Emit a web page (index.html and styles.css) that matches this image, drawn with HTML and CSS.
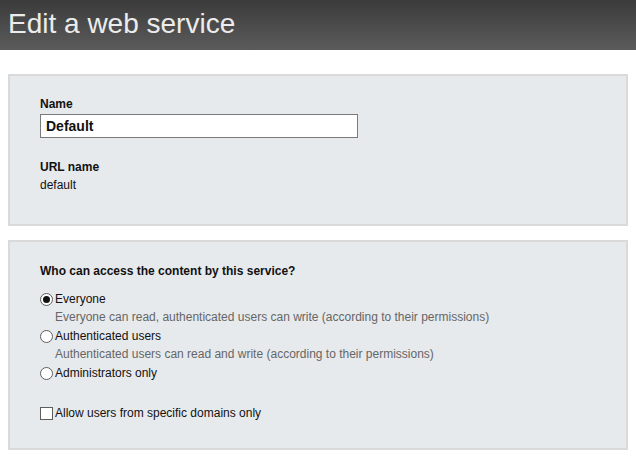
FILE: index.html
```html
<!DOCTYPE html>
<html>
<head>
<meta charset="utf-8">
<link rel="stylesheet" href="styles.css">
</head>
<body>
<header class="topbar"><h1 class="title">Edit a web service</h1></header>
<main class="content">
  <section class="panel panel-main">
    <label class="field-label" for="name">Name</label>
    <input class="text-input" id="name" type="text" value="Default">
    <div class="field-label url-label">URL name</div>
    <div class="field-value">default</div>
  </section>
  <section class="panel panel-access">
    <div class="field-label question">Who can access the content by this service?</div>
    <label class="option"><input type="radio" name="access" class="radio" checked><span>Everyone</span></label>
    <div class="desc">Everyone can read, authenticated users can write (according to their permissions)</div>
    <label class="option"><input type="radio" name="access" class="radio"><span>Authenticated users</span></label>
    <div class="desc">Authenticated users can read and write (according to their permissions)</div>
    <label class="option"><input type="radio" name="access" class="radio"><span>Administrators only</span></label>
    <label class="option check-row"><input type="checkbox" class="check"><span>Allow users from specific domains only</span></label>
  </section>
</main>
</body>
</html>
```
FILE: styles.css
```css
html, body {
  margin: 0;
  padding: 0;
  background: #fff;
  font-family: "Liberation Sans", Arial, sans-serif;
  font-size: 12px;
  color: #111;
}
.topbar {
  height: 50px;
  background: linear-gradient(#3b3b3b, #5b5b5b);
  display: flex;
  align-items: center;
}
.title {
  margin: 0 0 0 8px;
  font-weight: normal;
  font-size: 28px;
  color: #ececec;
  line-height: 32px;
  padding-bottom: 2px;
}
.content {
  padding: 24px 8px 0 8px;
  display: flex;
  flex-direction: column;
  gap: 14px;
}
.panel {
  border: 2px solid #dadada;
  background: #e7eaed;
  display: flex;
  flex-direction: column;
  align-items: flex-start;
}
.panel-main {
  padding: 21px 30px 32px 30px;
}
.panel-access {
  padding: 22px 30px 26px 30px;
}
.field-label {
  font-weight: bold;
  line-height: 14px;
  display: block;
}
.text-input {
  margin: 3px 0 0 0;
  width: 318px;
  height: 24px;
  box-sizing: border-box;
  border: 1px solid #7a7a7a;
  padding: 0 5px;
  font-family: "Liberation Sans", Arial, sans-serif;
  font-weight: bold;
  font-size: 14px;
  color: #111;
  background: #fff;
  outline: none;
}
.url-label {
  margin-top: 22px;
}
.field-value {
  margin-top: 4px;
  line-height: 14px;
}
.question {
  margin-bottom: 12px;
}
.option {
  display: flex;
  align-items: center;
  line-height: 18px;
  height: 18px;
}
.desc + .option {
  margin-top: 1px;
}
.radio, .check {
  -webkit-appearance: none;
  appearance: none;
  margin: 0 2px 0 0;
  width: 13px;
  height: 13px;
  box-sizing: border-box;
  border: 1px solid #5e5e5e;
  background: #fff;
  position: relative;
}
.radio {
  border-radius: 50%;
}
.radio:checked::after {
  content: "";
  position: absolute;
  left: 2px;
  top: 2px;
  width: 7px;
  height: 7px;
  border-radius: 50%;
  background: #111;
}
.desc {
  color: #666;
  line-height: 18px;
  padding-left: 15px;
}
.check-row {
  margin-top: 22px;
}
```
